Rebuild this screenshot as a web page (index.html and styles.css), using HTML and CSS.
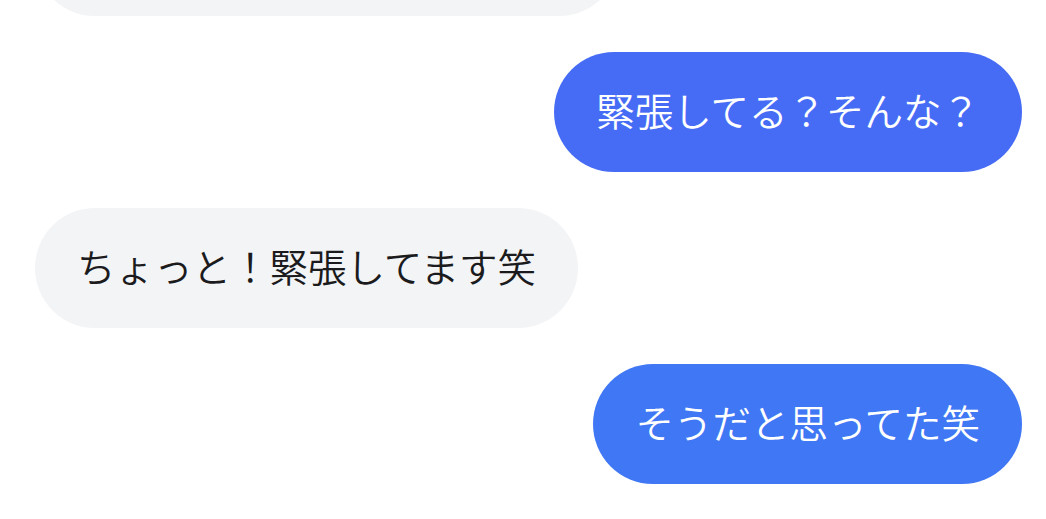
FILE: index.html
```html
<!DOCTYPE html>
<html lang="ja">
<head>
<meta charset="utf-8">
<title>Chat</title>
<link rel="stylesheet" href="styles.css">
</head>
<body>
<div class="thread">
  <div class="row in"><div class="bubble gray clipped"></div></div>
  <div class="row out"><div class="bubble blue1"><span class="msg">緊張してる？そんな？</span></div></div>
  <div class="row in"><div class="bubble gray"><span class="msg">ちょっと！緊張してます笑</span></div></div>
  <div class="row out"><div class="bubble blue2"><span class="msg">そうだと思ってた笑</span></div></div>
</div>
</body>
</html>
```
FILE: styles.css
```css
html, body {
  margin: 0;
  padding: 0;
  background: #ffffff;
  overflow: hidden;
}
body {
  width: 1046px;
  height: 519px;
  font-family: "Noto Sans CJK JP", "Noto Sans", sans-serif;
}
.thread {
  display: flex;
  flex-direction: column;
  gap: 36px;
  margin-top: -104px;
  padding: 0 24px 0 35px;
}
.row {
  display: flex;
}
.row.in { justify-content: flex-start; }
.row.out { justify-content: flex-end; }
.bubble {
  box-sizing: border-box;
  height: 120px;
  display: flex;
  align-items: center;
  border-radius: 60px;
  padding: 0 42px 6px 42px;
  font-size: 38.5px;
  font-weight: 350;
  white-space: nowrap;
}
.bubble.clipped {
  width: 584px;
}
.msg {
  line-height: 1.2;
}
.gray {
  background: #f3f4f6;
  color: #1b1b1d;
}
.blue1 {
  background: #466cf5;
  color: #ffffff;
}
.blue2 {
  background: #3f77f4;
  color: #ffffff;
}
```
